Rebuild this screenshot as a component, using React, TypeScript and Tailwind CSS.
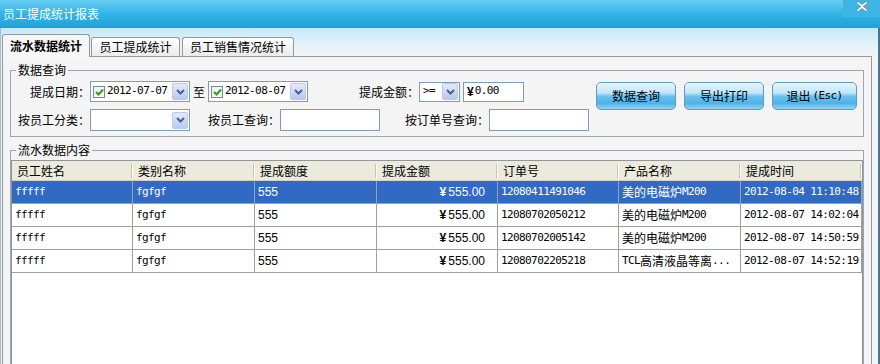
import React from "react";

const cjk = "font-['Noto_Sans_CJK_SC',sans-serif] text-[12px]";
const mono = "font-['DejaVu_Sans_Mono','Noto_Sans_CJK_SC',monospace] text-[11px] tracking-[-0.6px]";
const sans = "font-['Liberation_Sans','Noto_Sans_CJK_SC',sans-serif] text-[12px]";

type Seg = [string, "c" | "m"];

const rows: {
  name: string;
  cat: string;
  quota: string;
  amount: string;
  order: string;
  product: Seg[];
  time: string;
}[] = [
  { name: "fffff", cat: "fgfgf", quota: "555", amount: "555.00", order: "12080411491046", product: [["美的电磁炉", "c"], ["M200", "m"]], time: "2012-08-04 11:10:48" },
  { name: "fffff", cat: "fgfgf", quota: "555", amount: "555.00", order: "12080702050212", product: [["美的电磁炉", "c"], ["M200", "m"]], time: "2012-08-07 14:02:04" },
  { name: "fffff", cat: "fgfgf", quota: "555", amount: "555.00", order: "12080702005142", product: [["美的电磁炉", "c"], ["M200", "m"]], time: "2012-08-07 14:50:59" },
  { name: "fffff", cat: "fgfgf", quota: "555", amount: "555.00", order: "12080702205218", product: [["TCL", "m"], ["高清液晶等离", "c"], ["...", "m"]], time: "2012-08-07 14:52:19" },
];

const headers = ["员工姓名", "类别名称", "提成额度", "提成金额", "订单号", "产品名称", "提成时间"];

function DropBtn() {
  return (
    <div className="ml-auto flex h-[17px] w-[16px] items-center justify-center rounded-[2px] border border-[#b9c9ef] bg-linear-to-b from-[#e3ebfd] to-[#b6c9f4]">
      <svg width="9" height="6" viewBox="0 0 9 6">
        <path d="M1 1 L4.5 4.5 L8 1" fill="none" stroke="#4d6185" strokeWidth="2" />
      </svg>
    </div>
  );
}

function Check() {
  return (
    <div className="flex h-[12px] w-[12px] shrink-0 items-center justify-center border border-[#6e8aa5] bg-linear-to-br from-[#f3f2dc] to-[#ffffff]">
      <svg width="9" height="8" viewBox="0 0 9 8">
        <path d="M1 4 L3.5 6.5 L8 1.5" fill="none" stroke="#21a121" strokeWidth="2" />
      </svg>
    </div>
  );
}

function DateBox({ value }: { value: string }) {
  return (
    <div className="flex h-[21px] w-[100px] items-center border border-[#7f9db9] bg-white pl-[2px] pr-[1px]">
      <Check />
      <span className={`ml-[2px] ${mono}`}>{value}</span>
      <DropBtn />
    </div>
  );
}

function Input({ w, children }: { w: string; children?: React.ReactNode }) {
  return (
    <div className={`flex h-[22px] items-center border border-[#7f9db9] bg-white pl-[3px] pr-[1px] ${w}`}>
      {children}
    </div>
  );
}

function Btn({ children, w }: { children: React.ReactNode; w: string }) {
  return (
    <div
      className={`flex h-[28px] items-center justify-center rounded-[5px] border border-[#5d9bcb] bg-[linear-gradient(180deg,#e6f5fd_0%,#bfe6fa_38%,#69c0ef_52%,#4cb2ea_78%,#93d5f5_100%)] shadow-[inset_0_1px_0_rgba(255,255,255,0.8)] ${w} ${cjk}`}
    >
      {children}
    </div>
  );
}

export default function App() {
  return (
    <div className="flex h-[364px] w-[880px] flex-col overflow-hidden bg-[#f2f3f4] text-black">
      {/* title bar */}
      <div className="flex h-[28px] shrink-0 items-start justify-between bg-linear-to-b from-[#66cef3] via-[#33b3e5] to-[#1ea2da]">
        <span className={`pl-[3px] pt-[6px] leading-[16px] text-white ${cjk}`}>员工提成统计报表</span>
        <div className="flex h-[17px] w-[37px] items-start justify-center bg-[#3cb4e4] pt-[2px]">
          <svg width="12" height="9" viewBox="0 0 12 9">
            <path d="M1.5 0.5 L6 4 L10.5 0.5 M1.5 8.5 L6 5 L10.5 8.5" fill="none" stroke="#7a8a96" strokeWidth="3" />
            <path d="M1.5 0.5 L6 4 L10.5 0.5 M1.5 8.5 L6 5 L10.5 8.5" fill="none" stroke="#ffffff" strokeWidth="1.6" />
          </svg>
        </div>
      </div>

      {/* body */}
      <div className="flex flex-1 flex-col border-l border-r-2 border-l-[#a9bfcf] border-r-[#3a7a9a] bg-[linear-gradient(180deg,#c6e9fa_0px,#e9f3f8_20px,#f2f3f4_28px)]">
        {/* tabs */}
        <div className="flex items-end pl-[1px] pt-[6px]">
          <div className={`relative z-10 -mb-px flex h-[23px] w-[88px] items-center justify-center rounded-t-[3px] border border-b-0 border-[#919b9c] bg-[#f6f6f6] font-bold ${cjk}`}>
            流水数据统计
          </div>
          <div className={`ml-[1px] flex h-[19px] w-[89px] items-center justify-center rounded-t-[3px] border border-b-0 border-[#919b9c] bg-linear-to-b from-[#ffffff] to-[#ecebe6] ${cjk}`}>
            员工提成统计
          </div>
          <div className={`ml-[2px] flex h-[19px] w-[112px] items-center justify-center rounded-t-[3px] border border-b-0 border-[#919b9c] bg-linear-to-b from-[#ffffff] to-[#ecebe6] ${cjk}`}>
            员工销售情况统计
          </div>
        </div>

        {/* tab panel */}
        <div className="ml-[1px] flex w-[870px] flex-1 flex-col border border-[#919b9c] bg-[#f4f4f4] pl-[7px]">
          <fieldset className="mt-[6px] w-[854px] border border-[#9ca6b0]">
            <legend className={`ml-[5px] px-[2px] leading-[14px] ${cjk}`}>数据查询</legend>
            <div className="flex pb-[5px] pt-[4px]">
              <div className="flex w-[578px] flex-col gap-[7px]">
                <div className="flex h-[21px] items-center">
                  <span className={`w-[79px] text-right ${cjk}`}>提成日期：</span>
                  <DateBox value="2012-07-07" />
                  <span className={`ml-[3px] w-[15px] ${cjk}`}>至</span>
                  <DateBox value="2012-08-07" />
                  <span className={`w-[111px] text-right ${cjk}`}>提成金额：</span>
                  <div className="flex h-[20px] w-[41px] items-center border border-[#7f9db9] bg-white pl-[3px] pr-[1px]">
                    <span className={mono}>&gt;=</span>
                    <DropBtn />
                  </div>
                  <div className="ml-[3px] flex h-[20px] w-[61px] items-center border border-[#7f9db9] bg-white pl-[3px]">
                    <span className={`font-bold ${sans}`}>¥</span>
                    <span className={`ml-[1px] ${mono}`}>0.00</span>
                  </div>
                </div>
                <div className="flex h-[22px] items-center">
                  <span className={`w-[79px] text-right ${cjk}`}>按员工分类：</span>
                  <Input w="w-[100px]">
                    <DropBtn />
                  </Input>
                  <span className={`w-[90px] text-right ${cjk}`}>按员工查询：</span>
                  <Input w="w-[100px]" />
                  <span className={`w-[109px] text-right ${cjk}`}>按订单号查询：</span>
                  <Input w="w-[100px]" />
                </div>
              </div>
              <div className="ml-[7px] mt-[1px] flex gap-[8px]">
                <Btn w="w-[80px]">数据查询</Btn>
                <Btn w="w-[80px]">导出打印</Btn>
                <Btn w="w-[85px]">
                  退出<span className={`ml-[2px] ${mono}`}>(Esc)</span>
                </Btn>
              </div>
            </div>
          </fieldset>

          <fieldset className="mt-[6px] w-[854px] flex-1 border border-[#9ca6b0]">
            <legend className={`ml-[5px] px-[2px] leading-[14px] ${cjk}`}>流水数据内容</legend>
            <div className="pt-[3px]">
              <div className="h-[260px] w-[852px] border border-[#8e969e] bg-white">
                <div className="grid h-[20px] grid-cols-[121px_122px_122px_121px_121px_122px_121px] border-b border-[#d6d2c2] bg-[#ebeadb]">
                  {headers.map((h) => (
                    <div key={h} className="flex items-center">
                      <span className={`flex-1 pl-[5px] ${cjk}`}>{h}</span>
                      <div className="h-[14px] w-[1px] bg-[#c7c5b2]" />
                      <div className="h-[14px] w-[1px] bg-white" />
                    </div>
                  ))}
                </div>
                {rows.map((r, i) => {
                  const sel = i === 0;
                  const cell = `flex h-[23px] items-center border-b border-r border-[#a0a0a0] pl-[3px] ${sel ? "bg-[#316ac5] text-white" : ""}`;
                  return (
                    <div key={r.order} className="grid grid-cols-[121px_122px_122px_121px_121px_122px_121px]">
                      <div className={`${cell} ${mono}`}>{r.name}</div>
                      <div className={`${cell} ${mono}`}>{r.cat}</div>
                      <div className={`${cell} ${sans}`}>{r.quota}</div>
                      <div className={`${cell} justify-end pr-[12px] ${sans}`}>
                        <span className="font-bold">¥</span>
                        <span className="ml-[2px]">{r.amount}</span>
                      </div>
                      <div className={`${cell} ${mono}`}>{r.order}</div>
                      <div className={cell}>
                        {r.product.map(([t, k], j) => (
                          <span key={j} className={k === "c" ? cjk : mono}>
                            {t}
                          </span>
                        ))}
                      </div>
                      <div className={`${cell} ${mono}`}>{r.time}</div>
                    </div>
                  );
                })}
              </div>
            </div>
          </fieldset>
        </div>
      </div>
    </div>
  );
}
